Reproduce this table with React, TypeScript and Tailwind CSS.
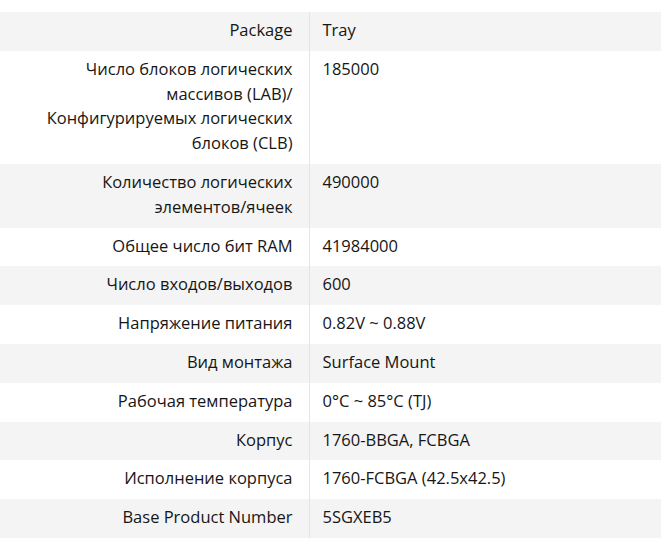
const specs: [string, string][] = [
  ["Package", "Tray"],
  ["Число блоков логических массивов (LAB)/ Конфигурируемых логических блоков (CLB)", "185000"],
  ["Количество логических элементов/ячеек", "490000"],
  ["Общее число бит RAM", "41984000"],
  ["Число входов/выходов", "600"],
  ["Напряжение питания", "0.82V ~ 0.88V"],
  ["Вид монтажа", "Surface Mount"],
  ["Рабочая температура", "0°C ~ 85°C (TJ)"],
  ["Корпус", "1760-BBGA, FCBGA"],
  ["Исполнение корпуса", "1760-FCBGA (42.5x42.5)"],
  ["Base Product Number", "5SGXEB5"],
];

export default function App() {
  return (
    <div className="min-h-screen bg-white pt-3 font-['Open_Sans',sans-serif] text-[16.5px] font-medium leading-[24.8px] text-[#161616]">
      <table className="w-full border-collapse">
        <tbody>
          {specs.map(([label, value], i) => (
            <tr key={label} className={i % 2 === 0 ? "bg-[#f4f4f4]" : "bg-white"}>
              <td className="w-[309px] border-r border-[#e4e4e4] pt-[6px] pb-[8px] pr-4 pl-8 text-right align-top">
                {label}
              </td>
              <td className="pt-[6px] pb-[8px] pl-[13px] align-top">{value}</td>
            </tr>
          ))}
        </tbody>
      </table>
    </div>
  );
}
